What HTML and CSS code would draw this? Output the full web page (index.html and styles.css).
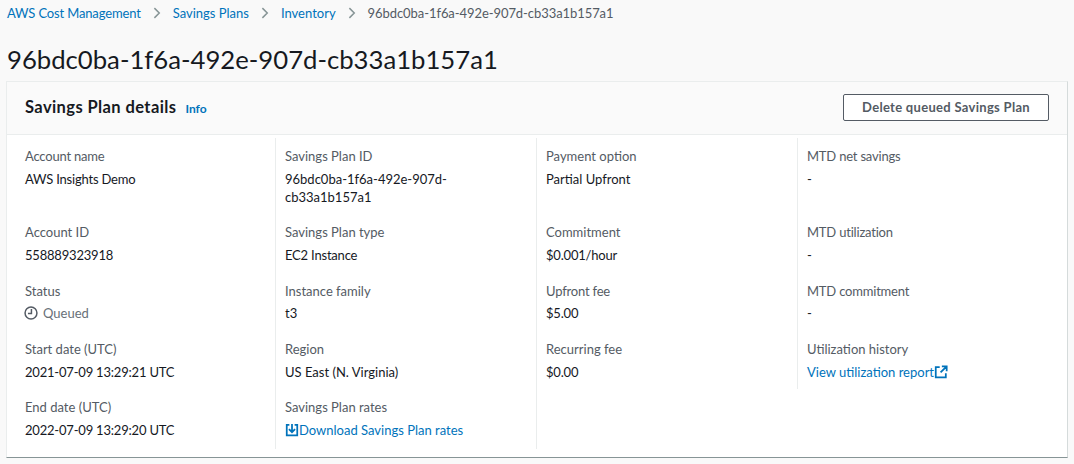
FILE: index.html
```html
<!DOCTYPE html>
<html lang="en">
<head>
<meta charset="utf-8">
<title>Savings Plan details</title>
<link rel="stylesheet" href="styles.css">
</head>
<body>
<nav class="crumbs">
  <a class="tight" href="#">AWS Cost Management</a>
  <svg class="sep" viewBox="0 0 16 16"><path d="M4.500 1.500 11 8l-6.500 6.500"/></svg>
  <a href="#">Savings Plans</a>
  <svg class="sep" viewBox="0 0 16 16"><path d="M4.500 1.500 11 8l-6.500 6.500"/></svg>
  <a href="#">Inventory</a>
  <svg class="sep" viewBox="0 0 16 16"><path d="M4.500 1.500 11 8l-6.500 6.500"/></svg>
  <span class="current">96bdc0ba-1f6a-492e-907d-cb33a1b157a1</span>
</nav>
<h1 class="title">96bdc0ba-1f6a-492e-907d-cb33a1b157a1</h1>
<section class="card">
  <header class="card-head">
    <div class="head-title"><h2>Savings Plan details</h2><a class="info" href="#">Info</a></div>
    <button class="btn">Delete queued Savings Plan</button>
  </header>
  <div class="grid">
    <div class="cell first"><div class="label tight">Account name</div><div class="value tight">AWS Insights Demo</div></div>
    <div class="cell"><div class="label">Savings Plan ID</div><div class="value narrow">96bdc0ba-1f6a-492e-907d-cb33a1b157a1</div></div>
    <div class="cell"><div class="label">Payment option</div><div class="value">Partial Upfront</div></div>
    <div class="cell"><div class="label tight">MTD net savings</div><div class="value">-</div></div>

    <div class="cell first"><div class="label">Account ID</div><div class="value num">558889323918</div></div>
    <div class="cell"><div class="label">Savings Plan type</div><div class="value tight">EC2 Instance</div></div>
    <div class="cell"><div class="label">Commitment</div><div class="value num">$0.001/hour</div></div>
    <div class="cell"><div class="label tight">MTD utilization</div><div class="value">-</div></div>

    <div class="cell first"><div class="label">Status</div><div class="value status"><svg class="clock" viewBox="0 0 16 16"><circle cx="8" cy="8" r="6.800"/><path d="M8.500 3.500v5H4.500"/></svg>Queued</div></div>
    <div class="cell"><div class="label">Instance family</div><div class="value">t3</div></div>
    <div class="cell"><div class="label tight">Upfront fee</div><div class="value num">$5.00</div></div>
    <div class="cell"><div class="label tight">MTD commitment</div><div class="value">-</div></div>

    <div class="cell first"><div class="label">Start date (UTC)</div><div class="value num">2021-07-09 13:29:21 UTC</div></div>
    <div class="cell"><div class="label">Region</div><div class="value">US East (N. Virginia)</div></div>
    <div class="cell"><div class="label">Recurring fee</div><div class="value num">$0.00</div></div>
    <div class="cell"><div class="label">Utilization history</div><div class="value"><a class="link" href="#">View utilization report<svg class="ico" viewBox="0 0 16 16"><path d="M6.500 2.500H2v11.500h11.500V9.500M9 1.500h5.500V7M14.500 1.500 7.500 8.500"/></svg></a></div></div>

    <div class="cell first"><div class="label">End date (UTC)</div><div class="value num">2022-07-09 13:29:20 UTC</div></div>
    <div class="cell"><div class="label">Savings Plan rates</div><div class="value"><a class="link" href="#"><svg class="ico" viewBox="0 0 16 16"><path d="M5 2H2v12h12V2h-3M8 1v9M4.500 7 8 10.500 11.500 7"/></svg>Download Savings Plan rates</a></div></div>
    <div class="cell"></div>
  </div>
</section>
</body>
</html>
```
FILE: styles.css
```css
* { box-sizing: border-box; }
html, body { margin: 0; }
body {
  height: 464px;
  overflow: hidden;
  background: #f9f9f9;
  color: #16191f;
  font-family: Lato, "Noto Sans", sans-serif;
  font-size: 13px;
  line-height: 18px;
  padding: 0 6px;
}
a { color: #0073bb; text-decoration: none; }
.crumbs { display: flex; align-items: center; height: 25px; padding-left: 1px; }
.crumbs a, .current { white-space: nowrap; }
.crumbs .tight { letter-spacing: -0.15px; }
.current { color: #545b64; letter-spacing: -0.07px; }
.sep { width: 12px; height: 12px; margin: 0 10px; fill: none; stroke: #879596; stroke-width: 2; }
.title { margin: 17px 0 0 1px; font-size: 25.7px; font-weight: 400; line-height: 34px; }
.card {
  margin-top: 5px;
  height: 377px;
  background: #fff;
  border: 1px solid #eaeded;
  border-bottom: 1px solid #879596;
  border-right: 1px solid #d5dbdb;
}
.card-head {
  display: flex;
  align-items: center;
  justify-content: space-between;
  height: 53px;
  padding: 0 18px 2px 18px;
  background: #fafafa;
  border-bottom: 1px solid #eaeded;
}
.head-title { display: flex; align-items: baseline; gap: 9px; }
.card-head h2 { margin: 0; font-size: 16.5px; font-weight: 700; line-height: 22px; letter-spacing: 0.4px; }
.info { font-size: 12px; font-weight: 700; }
.btn {
  width: 206px;
  height: 27px;
  padding: 0;
  background: #fff;
  border: 1px solid #545b64;
  border-radius: 2px;
  color: #545b64;
  font: 700 13px Lato, "Noto Sans", sans-serif;
  letter-spacing: 0.3px;
}
.grid {
  display: grid;
  grid-template-columns: 268px 261px 261px 1fr;
  margin-top: 3px;
}
.cell { padding: 9px 10px 8.6px 9px; border-left: 1px solid #eaeded; }
.cell:last-child { grid-column: 3; min-height: 60px; }
.cell.first { border-left: 0; padding-left: 18px; }
.label { color: #545b64; margin-bottom: 4.7px; }
.tight { letter-spacing: -0.2px; }
.num { letter-spacing: -0.2px; }
.narrow { width: 175px; overflow-wrap: anywhere; }
.status { color: #687078; display: flex; align-items: center; gap: 5px; margin-left: -1px; }
.clock { width: 14px; height: 14px; fill: none; stroke: #545b64; stroke-width: 1.700; }
.ico { width: 14px; height: 14px; vertical-align: -2px; fill: none; stroke: #0073bb; stroke-width: 2; }
```
